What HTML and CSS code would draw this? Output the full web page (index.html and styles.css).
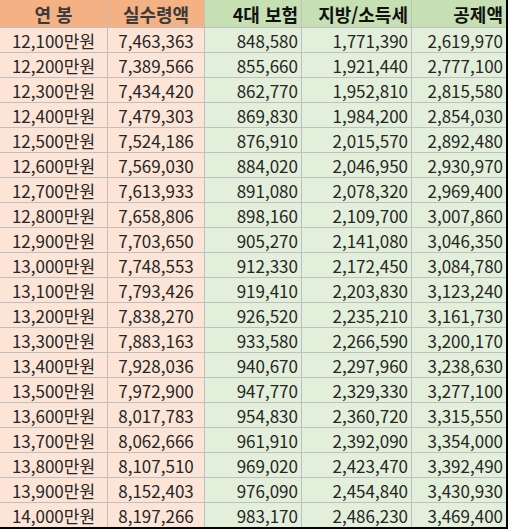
FILE: index.html
```html
<!DOCTYPE html>
<html lang="ko">
<head>
<meta charset="utf-8">
<link rel="stylesheet" href="styles.css">
</head>
<body>
<div class="sheet">
  <div class="hd hd-o c">연 봉</div><div class="hd hd-o c">실수령액</div><div class="hd hd-g r">4대 보험</div><div class="hd hd-g r">지방/소득세</div><div class="hd hd-g r">공제액</div>
  <div class="o c">12,100만원</div><div class="o c">7,463,363</div><div class="g r">848,580</div><div class="g r">1,771,390</div><div class="g r">2,619,970</div>
  <div class="o c">12,200만원</div><div class="o c">7,389,566</div><div class="g r">855,660</div><div class="g r">1,921,440</div><div class="g r">2,777,100</div>
  <div class="o c">12,300만원</div><div class="o c">7,434,420</div><div class="g r">862,770</div><div class="g r">1,952,810</div><div class="g r">2,815,580</div>
  <div class="o c">12,400만원</div><div class="o c">7,479,303</div><div class="g r">869,830</div><div class="g r">1,984,200</div><div class="g r">2,854,030</div>
  <div class="o c">12,500만원</div><div class="o c">7,524,186</div><div class="g r">876,910</div><div class="g r">2,015,570</div><div class="g r">2,892,480</div>
  <div class="o c">12,600만원</div><div class="o c">7,569,030</div><div class="g r">884,020</div><div class="g r">2,046,950</div><div class="g r">2,930,970</div>
  <div class="o c">12,700만원</div><div class="o c">7,613,933</div><div class="g r">891,080</div><div class="g r">2,078,320</div><div class="g r">2,969,400</div>
  <div class="o c">12,800만원</div><div class="o c">7,658,806</div><div class="g r">898,160</div><div class="g r">2,109,700</div><div class="g r">3,007,860</div>
  <div class="o c">12,900만원</div><div class="o c">7,703,650</div><div class="g r">905,270</div><div class="g r">2,141,080</div><div class="g r">3,046,350</div>
  <div class="o c">13,000만원</div><div class="o c">7,748,553</div><div class="g r">912,330</div><div class="g r">2,172,450</div><div class="g r">3,084,780</div>
  <div class="o c">13,100만원</div><div class="o c">7,793,426</div><div class="g r">919,410</div><div class="g r">2,203,830</div><div class="g r">3,123,240</div>
  <div class="o c">13,200만원</div><div class="o c">7,838,270</div><div class="g r">926,520</div><div class="g r">2,235,210</div><div class="g r">3,161,730</div>
  <div class="o c">13,300만원</div><div class="o c">7,883,163</div><div class="g r">933,580</div><div class="g r">2,266,590</div><div class="g r">3,200,170</div>
  <div class="o c">13,400만원</div><div class="o c">7,928,036</div><div class="g r">940,670</div><div class="g r">2,297,960</div><div class="g r">3,238,630</div>
  <div class="o c">13,500만원</div><div class="o c">7,972,900</div><div class="g r">947,770</div><div class="g r">2,329,330</div><div class="g r">3,277,100</div>
  <div class="o c">13,600만원</div><div class="o c">8,017,783</div><div class="g r">954,830</div><div class="g r">2,360,720</div><div class="g r">3,315,550</div>
  <div class="o c">13,700만원</div><div class="o c">8,062,666</div><div class="g r">961,910</div><div class="g r">2,392,090</div><div class="g r">3,354,000</div>
  <div class="o c">13,800만원</div><div class="o c">8,107,510</div><div class="g r">969,020</div><div class="g r">2,423,470</div><div class="g r">3,392,490</div>
  <div class="o c">13,900만원</div><div class="o c">8,152,403</div><div class="g r">976,090</div><div class="g r">2,454,840</div><div class="g r">3,430,930</div>
  <div class="o c">14,000만원</div><div class="o c">8,197,266</div><div class="g r">983,170</div><div class="g r">2,486,230</div><div class="g r">3,469,400</div>
</div>
</body>
</html>
```
FILE: styles.css
```css
html, body {
  margin: 0;
  padding: 0;
  background: #ffffff;
}
.sheet {
  box-sizing: border-box;
  width: 508px;
  height: 529px;
  display: grid;
  grid-template-columns: 107px 96px 96px 109px 94px;
  grid-template-rows: 27px repeat(20, 24px);
  gap: 1px;
  background: #bfbfbf;
  border-right: 2px solid #000;
  border-bottom: 2px solid #000;
  font-family: "Noto Sans CJK KR", "Noto Sans", sans-serif;
  font-size: 17px;
  color: #262626;
}
.sheet > div {
  display: flex;
  align-items: center;
  line-height: 1;
  white-space: nowrap;
  overflow: hidden;
}
.c { justify-content: center; }
.r { justify-content: flex-end; padding-right: 3px; }
.o { background: #fce4d6; }
.g { background: #e2efda; }
.hd { font-weight: bold; font-size: 18px; }
.hd-o { background: #f4b183; color: #3a3a3a; }
.hd-g { background: #c6e0b4; color: #111; }
```
